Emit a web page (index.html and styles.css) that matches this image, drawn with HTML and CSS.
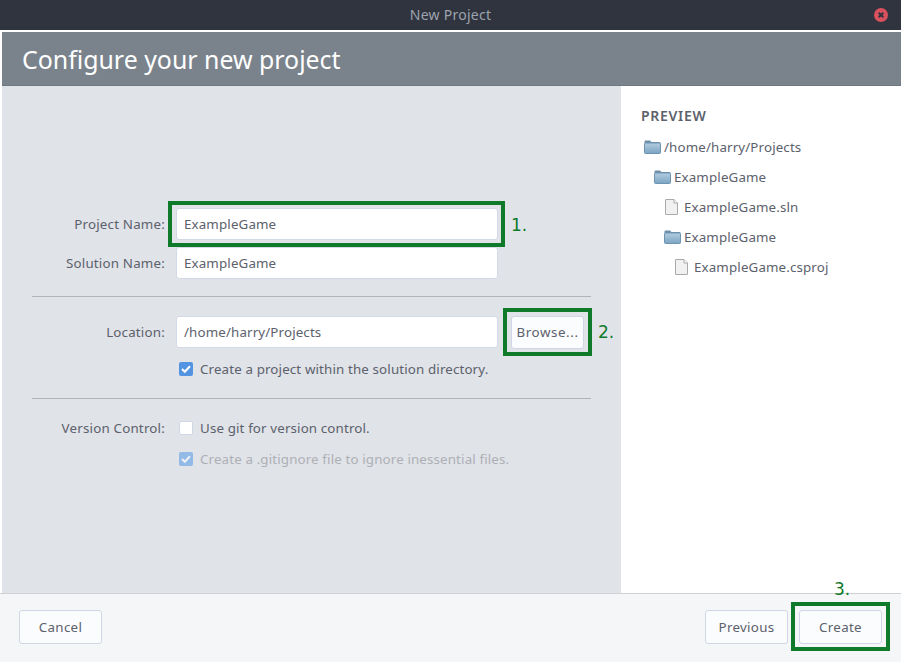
FILE: index.html

```html
<!DOCTYPE html>
<html lang="en">
<head>
  <meta charset="UTF-8">
  <title>New Project</title>
  <link rel="stylesheet" href="styles.css">
</head>
<body>
  <svg class="icon-defs" width="0" height="0">
    <defs>
      <linearGradient id="folderFill" x1="0" y1="0" x2="0" y2="1">
        <stop offset="0" stop-color="#b4cde0"/>
        <stop offset="1" stop-color="#7ba4c3"/>
      </linearGradient>
      <symbol id="folder" viewBox="0 0 17 14">
        <path d="M0.5 3V1.5a1 1 0 0 1 1-1h4.5l1.5 1.5h8a1 1 0 0 1 1 1V3z" fill="#6f8fa9"/>
        <rect x="0.5" y="3" width="16" height="10.5" rx="1" fill="url(#folderFill)" stroke="#6f94b1"/>
      </symbol>
      <symbol id="file" viewBox="0 0 13 16">
        <path d="M0.5 1a.5.5 0 0 1 .5-.5h8l3.5 3.5v11a.5.5 0 0 1-.5.5H1a.5.5 0 0 1-.5-.5z" fill="#f1f1f1" stroke="#a9a9a9"/>
        <path d="M9 .5V4h3.5" fill="#fff" stroke="#a9a9a9"/>
      </symbol>
    </defs>
  </svg>

  <div class="titlebar">
    <span class="titlebar-text">New Project</span>
    <span class="close-btn">
      <svg width="14" height="14" viewBox="0 0 14 14">
        <circle cx="7" cy="7" r="7" fill="#d9515d"/>
        <path d="M4.7 4.7l4.6 4.6M9.3 4.7l-4.6 4.6" stroke="#2f343f" stroke-width="2"/>
      </svg>
    </span>
  </div>

  <div class="window">
    <div class="banner">Configure your new project</div>

    <div class="content">
      <div class="form-pane">
        <div class="row">
          <label class="row-label">Project Name:</label>
          <input class="text-input" type="text" value="ExampleGame">
        </div>
        <div class="row row-second">
          <label class="row-label">Solution Name:</label>
          <input class="text-input" type="text" value="ExampleGame">
        </div>

        <hr class="divider divider-first">

        <div class="row row-location">
          <label class="row-label">Location:</label>
          <input class="text-input" type="text" value="/home/harry/Projects">
          <button class="btn btn-browse">Browse...</button>
        </div>
        <div class="row check-row check-row-first">
          <span class="row-label"></span>
          <span class="checkbox checked">
            <svg width="10" height="8" viewBox="0 0 10 8"><path d="M1 4l2.8 2.8L9 1.3" fill="none" stroke="#fff" stroke-width="2"/></svg>
          </span>
          <span class="check-text">Create a project within the solution directory.</span>
        </div>

        <hr class="divider divider-second">

        <div class="row check-row">
          <label class="row-label">Version Control:</label>
          <span class="checkbox"></span>
          <span class="check-text">Use git for version control.</span>
        </div>
        <div class="row check-row check-row-last">
          <span class="row-label"></span>
          <span class="checkbox checked disabled">
            <svg width="10" height="8" viewBox="0 0 10 8"><path d="M1 4l2.8 2.8L9 1.3" fill="none" stroke="#eef2f7" stroke-width="2"/></svg>
          </span>
          <span class="check-text muted">Create a .gitignore file to ignore inessential files.</span>
        </div>
      </div>

      <div class="preview-pane">
        <h4 class="preview-title">PREVIEW</h4>
        <ul class="tree">
          <li class="tree-item"><svg class="icon-folder"><use href="#folder"/></svg>/home/harry/Projects</li>
          <li class="tree-item level-1"><svg class="icon-folder"><use href="#folder"/></svg>ExampleGame</li>
          <li class="tree-item level-2"><svg class="icon-file"><use href="#file"/></svg>ExampleGame.sln</li>
          <li class="tree-item level-2"><svg class="icon-folder"><use href="#folder"/></svg>ExampleGame</li>
          <li class="tree-item level-3"><svg class="icon-file"><use href="#file"/></svg>ExampleGame.csproj</li>
        </ul>
      </div>
    </div>

    <div class="footer">
      <button class="btn btn-footer">Cancel</button>
      <div class="footer-right">
        <button class="btn btn-footer">Previous</button>
        <button class="btn btn-footer">Create</button>
      </div>
    </div>
  </div>

  <!-- green callouts drawn over the dialog -->
  <div class="callout callout-name"></div>
  <div class="callout callout-browse"></div>
  <div class="callout callout-create"></div>
  <span class="step step-1">1.</span>
  <span class="step step-2">2.</span>
  <span class="step step-3">3.</span>
</body>
</html>
```

FILE: styles.css

```css
* {
  box-sizing: border-box;
}

html, body {
  margin: 0;
  padding: 0;
}

body {
  position: relative;
  width: 901px;
  height: 662px;
  overflow: hidden;
  font-family: "Noto Sans", sans-serif;
  font-size: 13.33px;
  letter-spacing: 0.14px;
  color: #5c616c;
  background-color: #fff;
}

.icon-defs {
  position: absolute;
}

.titlebar {
  position: relative;
  height: 30px;
  display: flex;
  align-items: center;
  justify-content: center;
  padding-bottom: 1px;
  background-color: #2f343f;
  color: #9ea3ad;
  font-size: 14px;
  letter-spacing: 0.25px;
}

.close-btn {
  position: absolute;
  right: 13px;
  top: 8px;
  display: flex;
}

.window {
  display: flex;
  flex-direction: column;
  height: 632px;
  padding: 2px 0 0 2px;
  background-color: #fff;
}

.banner {
  height: 54px;
  padding: 9px 0 0 20px;
  background-color: #7a838c;
  border-bottom: 1px solid #6f7780;
  color: #fff;
  font-size: 24.9px;
  letter-spacing: 0;
  line-height: 36px;
}

.content {
  display: flex;
  height: 507px;
}

.form-pane {
  width: 619px;
  padding: 122px 30px 0;
  background-color: #e0e3e8;
}

.row {
  display: flex;
  align-items: center;
}

.row-second {
  margin-top: 7px;
}

.row-location {
  align-items: flex-start;
  line-height: 32px;
}

.row-label {
  width: 133px;
  margin-right: 11px;
  text-align: right;
  letter-spacing: 0.2px;
  flex-shrink: 0;
}

.text-input {
  width: 322px;
  height: 32px;
  padding: 0 7px;
  border: 1px solid #d3d9e6;
  border-radius: 3px;
  background-color: #fff;
  color: #5c616c;
  font-family: inherit;
  font-size: 13.33px;
  letter-spacing: inherit;
}

.divider {
  margin: 0;
  border: none;
  border-top: 1px solid #b1b3b8;
}

.divider-first {
  margin-top: 17px;
  margin-bottom: 19px;
}

.divider-second {
  margin-top: 19px;
  margin-bottom: 19px;
}

.btn {
  height: 34px;
  border: 1px solid #d0d6e6;
  border-radius: 3px;
  background-color: #fbfcfd;
  color: #5c616c;
  font-family: inherit;
  font-size: 13.33px;
  letter-spacing: inherit;
}

.btn-browse {
  width: 73px;
  height: 33px;
  margin-left: 13px;
  padding: 0 0 2px;
  letter-spacing: 0.6px;
}

.btn-footer {
  width: 83px;
  padding: 0;
  letter-spacing: 0.3px;
}

.check-row {
  height: 20px;
}

.check-row-first {
  margin-top: 10px;
}

.check-row-last {
  margin-top: 11px;
}

.checkbox {
  display: flex;
  align-items: center;
  justify-content: center;
  width: 14px;
  height: 14px;
  margin-left: 3px;
  margin-right: 7px;
  border: 1px solid #cfd6e6;
  border-radius: 2px;
  background-color: #fff;
}

.checkbox.checked {
  border: none;
  background-color: #5294e2;
}

.checkbox.disabled {
  background-color: #93b9e6;
}

.muted {
  color: #aeb0b6;
}

.preview-pane {
  flex: 1;
  padding: 21px 0 0 20px;
  background-color: #fff;
}

.preview-title {
  margin: 0 0 7px;
  font-size: 14px;
  font-weight: 600;
  letter-spacing: 0.7px;
  line-height: 18px;
}

.tree {
  margin: 0;
  padding: 0;
  list-style: none;
}

.tree-item {
  display: flex;
  align-items: center;
  height: 30px;
  padding-left: 3px;
}

.level-1 {
  padding-left: 13px;
}

.level-2 {
  padding-left: 23px;
}

.level-3 {
  padding-left: 33px;
}

.icon-folder {
  width: 17px;
  height: 14px;
  margin-right: 3px;
}

.icon-file {
  width: 13px;
  height: 16px;
  margin-left: 1px;
  margin-right: 6px;
}

.footer {
  flex: 1;
  display: flex;
  justify-content: space-between;
  align-items: flex-start;
  margin-left: -2px;
  padding: 16px 19px 0;
  background-color: #f5f6f7;
  border-top: 1px solid #cfd1d5;
}

.footer-right {
  display: flex;
  gap: 11px;
}

.callout {
  position: absolute;
  border: 4px solid #107a2b;
}

.callout-name {
  left: 168px;
  top: 201px;
  width: 337px;
  height: 46px;
}

.callout-browse {
  left: 503px;
  top: 308px;
  width: 89px;
  height: 48px;
}

.callout-create {
  left: 791px;
  top: 602px;
  width: 99px;
  height: 49px;
}

.step {
  position: absolute;
  font-family: "DejaVu Sans", sans-serif;
  font-size: 17px;
  letter-spacing: 0;
  line-height: 20px;
  color: #107a2b;
}

.step-1 {
  left: 511px;
  top: 215px;
}

.step-2 {
  left: 598px;
  top: 322px;
}

.step-3 {
  left: 834px;
  top: 579px;
}
```
